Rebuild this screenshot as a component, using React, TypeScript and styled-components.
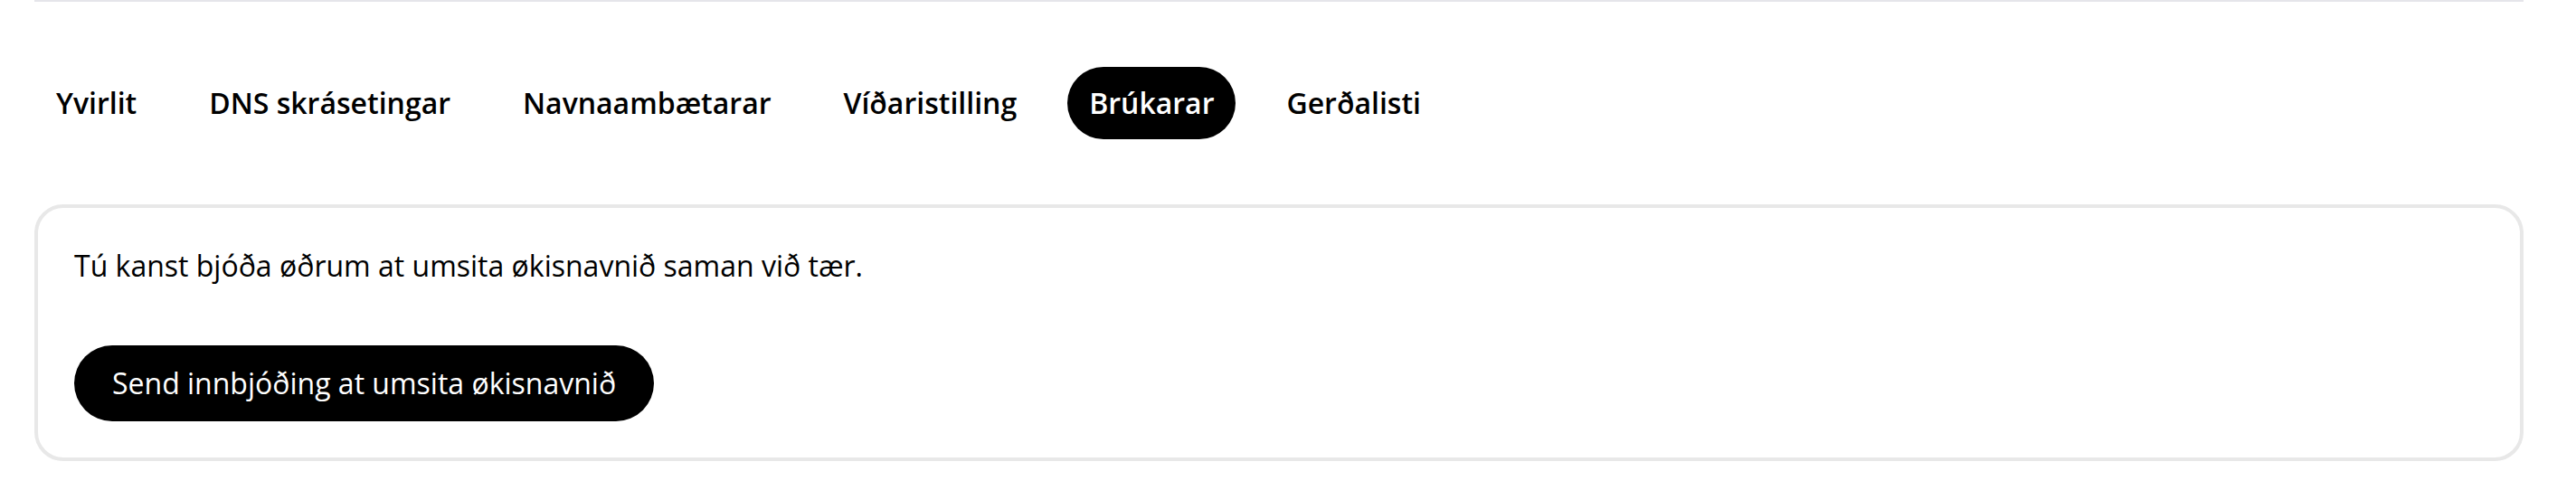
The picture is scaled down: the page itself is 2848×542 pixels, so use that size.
import React from "react";
import styled, { createGlobalStyle } from "styled-components";

const GlobalStyle = createGlobalStyle`
  html, body {
    margin: 0;
    padding: 0;
    background: #ffffff;
  }
  body {
    font-family: "Open Sans", "Noto Sans", "Liberation Sans", sans-serif;
    color: #000000;
    -webkit-font-smoothing: antialiased;
  }
`;

const Page = styled.div`
  width: 2752px;
  margin-left: 38px;
  display: flex;
  flex-direction: column;
`;

const Divider = styled.div`
  height: 2px;
  background: #e5e5ea;
`;

const TabBar = styled.nav`
  display: flex;
  align-items: center;
  gap: 32px;
  margin-top: 72px;
`;

const Tab = styled.button<{ $active?: boolean }>`
  appearance: none;
  border: none;
  margin: 0;
  padding: 16px 24px;
  border-radius: 40px;
  font-family: "Open Sans", "Noto Sans", sans-serif;
  font-weight: 600;
  font-size: 32px;
  line-height: 48px;
  cursor: pointer;
  white-space: nowrap;
  background: ${(p) => (p.$active ? "#000000" : "transparent")};
  color: ${(p) => (p.$active ? "#ffffff" : "#000000")};
`;

const Card = styled.section`
  margin-top: 72px;
  border: 4px solid #e8e8e8;
  border-radius: 32px;
  padding: 40px;
  display: flex;
  flex-direction: column;
  align-items: flex-start;
`;

const Lead = styled.p`
  margin: 0 0 64px 0;
  font-size: 32px;
  line-height: 48px;
  font-weight: 400;
  color: #000000;
`;

const PrimaryButton = styled.button`
  appearance: none;
  border: none;
  margin: 0;
  padding: 18px 42px;
  border-radius: 42px;
  background: #000000;
  color: #ffffff;
  font-family: "Open Sans", "Noto Sans", sans-serif;
  font-weight: 400;
  font-size: 32px;
  line-height: 48px;
  white-space: nowrap;
  cursor: pointer;
`;

const tabs = [
  "Yvirlit",
  "DNS skrásetingar",
  "Navnaambætarar",
  "Víðaristilling",
  "Brúkarar",
  "Gerðalisti",
];

export default function App() {
  return (
    <>
      <GlobalStyle />
      <Page>
        <Divider />
        <TabBar>
          {tabs.map((t) => (
            <Tab key={t} $active={t === "Brúkarar"}>
              {t}
            </Tab>
          ))}
        </TabBar>
        <Card>
          <Lead>Tú kanst bjóða øðrum at umsita økisnavnið saman við tær.</Lead>
          <PrimaryButton>Send innbjóðing at umsita økisnavnið</PrimaryButton>
        </Card>
      </Page>
    </>
  );
}
